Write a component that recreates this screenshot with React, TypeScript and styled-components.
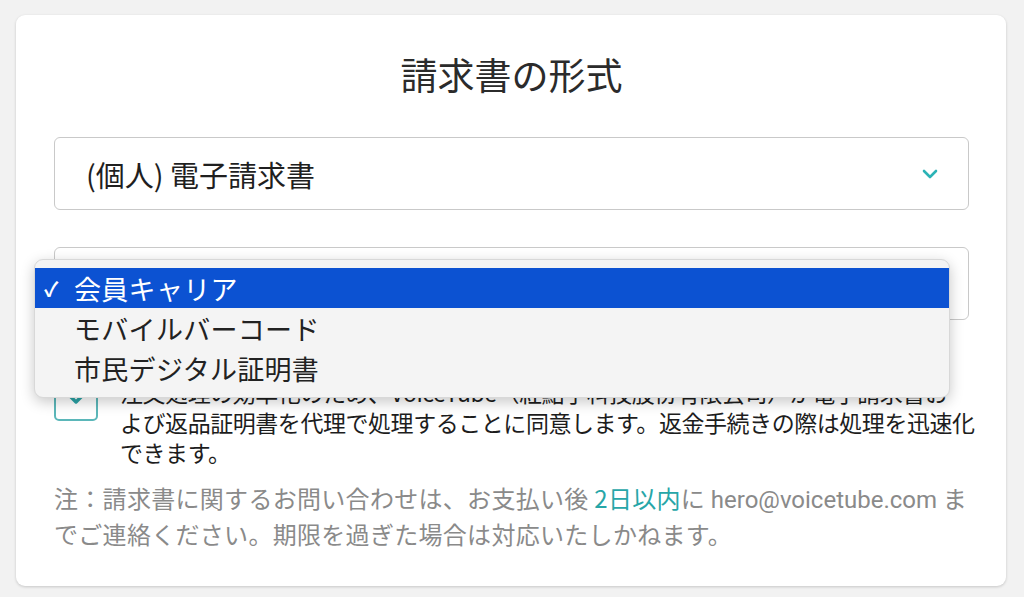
import React from 'react';
import styled, { createGlobalStyle } from 'styled-components';

const GlobalStyle = createGlobalStyle`
  html, body {
    margin: 0;
    padding: 0;
    background: #f2f2f2;
  }
  body {
    font-family: "Noto Sans CJK JP", "Noto Sans", "Liberation Sans", sans-serif;
  }
`;

const options = ['会員キャリア', 'モバイルバーコード', '市民デジタル証明書'];

const App = () => {
  return (
    <Page>
      <GlobalStyle />
      <Card>
        <Title>請求書の形式</Title>

        <Select>
          <SelectText>(個人) 電子請求書</SelectText>
          <Chevron width="16" height="10" viewBox="0 0 16 10">
            <path d="M2 2 L8 8 L14 2" fill="none" stroke="#2cb3b6" strokeWidth="2.6" strokeLinecap="round" strokeLinejoin="round" />
          </Chevron>
        </Select>

        <SelectWrap>
          <Select />
          <Menu>
            {options.map((o, i) => (
              <Option key={o} active={i === 0}>
                <Check>{i === 0 ? '✓' : ''}</Check>
                {o}
              </Option>
            ))}
          </Menu>
        </SelectWrap>

        <Agree>
          <Box>
            <svg width="20" height="14" viewBox="0 0 20 14">
              <path d="M3 3 L10 10 L17 3" fill="none" stroke="#2aa3a6" strokeWidth="3.4" strokeLinecap="round" strokeLinejoin="round" />
            </svg>
          </Box>
          <AgreeText>
            注文処理の効率化のため、VoiceTube（紅點子科技股份有限公司）が電子請求書お
            <br />
            よび返品証明書を代理で処理することに同意します。返金手続きの際は処理を迅速化
            <br />
            できます。
          </AgreeText>
        </Agree>

        <Note>
          注：請求書に関するお問い合わせは、お支払い後 <Teal>2日以内</Teal>に <Mail>hero@voicetube.com</Mail> ま
          <br />
          でご連絡ください。期限を過ぎた場合は対応いたしかねます。
        </Note>
      </Card>
    </Page>
  );
};

export default App;

const Page = styled.div`
  width: 1024px;
  height: 597px;
  padding: 15px 18px 11px 16px;
  box-sizing: border-box;
  background: #f2f2f2;
`;

const Card = styled.div`
  background: #fff;
  border-radius: 9px;
  box-shadow: 0 1px 3px rgba(0, 0, 0, 0.18);
  padding: 37px 37px 40px 38px;
  height: 100%;
  box-sizing: border-box;
`;

const Title = styled.div`
  text-align: center;
  font-size: 37px;
  line-height: 44px;
  color: #2b2b2b;
  margin-bottom: 41px;
`;

const Select = styled.div`
  height: 73px;
  box-sizing: border-box;
  border: 1px solid #c9c9c9;
  border-radius: 6px;
  display: flex;
  align-items: center;
  justify-content: space-between;
  padding: 0 30px 0 31px;
  background: #fff;
`;

const SelectText = styled.span`
  font-size: 29px;
  color: #1f1f1f;
`;

const Chevron = styled.svg`
  display: block;
`;

const SelectWrap = styled.div`
  position: relative;
  margin-top: 37px;
`;

const Menu = styled.div`
  position: absolute;
  top: 12px;
  left: -20px;
  width: 916px;
  box-sizing: border-box;
  padding: 8px 0 9px;
  background: #f4f4f4;
  border: 1px solid #d8d8d8;
  border-radius: 9px;
  box-shadow: 0 4px 14px rgba(0, 0, 0, 0.22);
  z-index: 10;
`;

const Option = styled.div<{ active?: boolean }>`
  height: 40px;
  display: flex;
  align-items: center;
  font-size: 27px;
  letter-spacing: 0.3px;
  color: ${(p) => (p.active ? '#fff' : '#222')};
  background: ${(p) => (p.active ? '#0c52d2' : 'transparent')};
`;

const Check = styled.span`
  width: 39px;
  padding-left: 9px;
  box-sizing: border-box;
  font-size: 20px;
  font-weight: 700;
`;

const Agree = styled.div`
  display: flex;
  align-items: flex-start;
  gap: 22px;
  margin-top: 57px;
`;

const Box = styled.div`
  flex: none;
  width: 44px;
  height: 44px;
  box-sizing: border-box;
  border: 2px solid #5bb7b9;
  border-radius: 5px;
  display: flex;
  align-items: center;
  justify-content: center;
`;

const AgreeText = styled.div`
  font-size: 23px;
  line-height: 30px;
  color: #1d1d1d;
  white-space: nowrap;
  letter-spacing: -0.45px;
`;

const Note = styled.div`
  margin-top: 14px;
  font-size: 24px;
  line-height: 33px;
  color: #8a8a8a;
  white-space: nowrap;
  letter-spacing: 0.3px;
`;

const Teal = styled.span`
  color: #27a6a8;
`;

const Mail = styled.span`
  font-family: Roboto, "Liberation Sans", sans-serif;
  letter-spacing: 0;
`;
